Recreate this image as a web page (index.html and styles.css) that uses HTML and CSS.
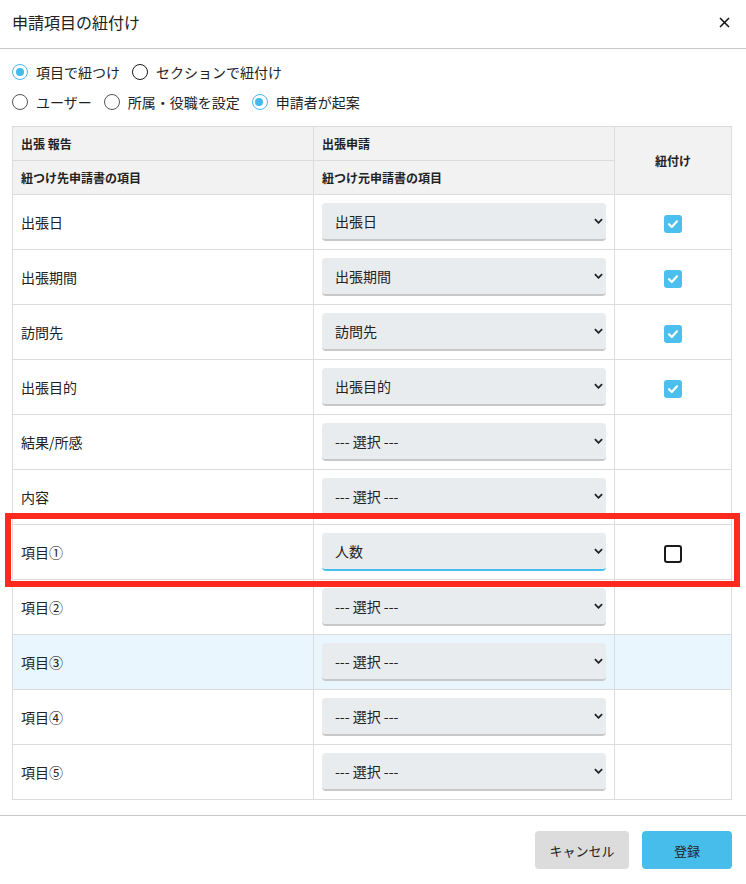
FILE: index.html
```html
<!DOCTYPE html>
<html lang="ja">
<head>
<meta charset="utf-8">
<title>申請項目の紐付け</title>
<link rel="stylesheet" href="styles.css">
</head>
<body>
<div class="dialog">
  <header class="dlg-head">
    <h1 class="dlg-title">申請項目の紐付け</h1>
    <button class="close-btn" aria-label="close">
      <svg width="11" height="11" viewBox="0 0 11 11"><path d="M1 1 L10 10 M10 1 L1 10" stroke="#111" stroke-width="1.5" fill="none"/></svg>
    </button>
  </header>

  <div class="dlg-body">
    <div class="radio-row">
      <label class="radio"><span class="rc on"></span>項目で紐つけ</label>
      <label class="radio"><span class="rc dark"></span>セクションで紐付け</label>
    </div>
    <div class="radio-row">
      <label class="radio"><span class="rc"></span>ユーザー</label>
      <label class="radio"><span class="rc"></span>所属・役職を設定</label>
      <label class="radio"><span class="rc on"></span>申請者が起案</label>
    </div>

    <div class="table-wrap">
      <table class="map">
        <colgroup><col class="c1"><col class="c2"><col class="c3"></colgroup>
        <thead>
          <tr><th>出張 報告</th><th>出張申請</th><th rowspan="2" class="center">紐付け</th></tr>
          <tr><th>紐つけ先申請書の項目</th><th>紐つけ元申請書の項目</th></tr>
        </thead>
        <tbody>
          <tr><td>出張日</td><td><div class="sel"><span>出張日</span><svg class="chev" viewBox="0 0 10 6"><path d="M1 1 L5 5 L9 1" stroke="#222" stroke-width="2" fill="none"/></svg></div></td><td class="center"><span class="cb on"><svg viewBox="0 0 18 18"><path d="M5 9.2 L7.8 12 L13 6.3" stroke="#fff" stroke-width="2.2" fill="none" stroke-linecap="round" stroke-linejoin="round"/></svg></span></td></tr>
          <tr><td>出張期間</td><td><div class="sel"><span>出張期間</span><svg class="chev" viewBox="0 0 10 6"><path d="M1 1 L5 5 L9 1" stroke="#222" stroke-width="2" fill="none"/></svg></div></td><td class="center"><span class="cb on"><svg viewBox="0 0 18 18"><path d="M5 9.2 L7.8 12 L13 6.3" stroke="#fff" stroke-width="2.2" fill="none" stroke-linecap="round" stroke-linejoin="round"/></svg></span></td></tr>
          <tr><td>訪問先</td><td><div class="sel"><span>訪問先</span><svg class="chev" viewBox="0 0 10 6"><path d="M1 1 L5 5 L9 1" stroke="#222" stroke-width="2" fill="none"/></svg></div></td><td class="center"><span class="cb on"><svg viewBox="0 0 18 18"><path d="M5 9.2 L7.8 12 L13 6.3" stroke="#fff" stroke-width="2.2" fill="none" stroke-linecap="round" stroke-linejoin="round"/></svg></span></td></tr>
          <tr><td>出張目的</td><td><div class="sel"><span>出張目的</span><svg class="chev" viewBox="0 0 10 6"><path d="M1 1 L5 5 L9 1" stroke="#222" stroke-width="2" fill="none"/></svg></div></td><td class="center"><span class="cb on"><svg viewBox="0 0 18 18"><path d="M5 9.2 L7.8 12 L13 6.3" stroke="#fff" stroke-width="2.2" fill="none" stroke-linecap="round" stroke-linejoin="round"/></svg></span></td></tr>
          <tr><td>結果/所感</td><td><div class="sel"><span>--- 選択 ---</span><svg class="chev" viewBox="0 0 10 6"><path d="M1 1 L5 5 L9 1" stroke="#222" stroke-width="2" fill="none"/></svg></div></td><td></td></tr>
          <tr><td>内容</td><td><div class="sel"><span>--- 選択 ---</span><svg class="chev" viewBox="0 0 10 6"><path d="M1 1 L5 5 L9 1" stroke="#222" stroke-width="2" fill="none"/></svg></div></td><td></td></tr>
          <tr><td>項目①</td><td><div class="sel focus"><span>人数</span><svg class="chev" viewBox="0 0 10 6"><path d="M1 1 L5 5 L9 1" stroke="#222" stroke-width="2" fill="none"/></svg></div></td><td class="center"><span class="cb"></span></td></tr>
          <tr><td>項目②</td><td><div class="sel"><span>--- 選択 ---</span><svg class="chev" viewBox="0 0 10 6"><path d="M1 1 L5 5 L9 1" stroke="#222" stroke-width="2" fill="none"/></svg></div></td><td></td></tr>
          <tr class="hover"><td>項目③</td><td><div class="sel"><span>--- 選択 ---</span><svg class="chev" viewBox="0 0 10 6"><path d="M1 1 L5 5 L9 1" stroke="#222" stroke-width="2" fill="none"/></svg></div></td><td></td></tr>
          <tr><td>項目④</td><td><div class="sel"><span>--- 選択 ---</span><svg class="chev" viewBox="0 0 10 6"><path d="M1 1 L5 5 L9 1" stroke="#222" stroke-width="2" fill="none"/></svg></div></td><td></td></tr>
          <tr><td>項目⑤</td><td><div class="sel"><span>--- 選択 ---</span><svg class="chev" viewBox="0 0 10 6"><path d="M1 1 L5 5 L9 1" stroke="#222" stroke-width="2" fill="none"/></svg></div></td><td></td></tr>
        </tbody>
      </table>
      <div class="highlight"></div>
    </div>
  </div>

  <footer class="dlg-foot">
    <button class="btn btn-cancel">キャンセル</button>
    <button class="btn btn-ok">登録</button>
  </footer>
</div>
</body>
</html>
```

FILE: styles.css
```css
* { box-sizing: border-box; }
html, body { margin: 0; padding: 0; background: #fff; }
body {
  font-family: "Noto Sans CJK JP", "Noto Sans", sans-serif;
  color: #222;
  width: 746px;
  height: 884px;
  overflow: hidden;
}
.dialog { width: 746px; height: 884px; display: flex; flex-direction: column; }

.dlg-head {
  height: 49px;
  border-bottom: 1px solid #c8c8c8;
  display: flex;
  align-items: center;
  justify-content: space-between;
  padding: 0 16px 4px 12px;
}
.dlg-title { margin: 0; font-size: 16px; font-weight: 400; color: #222; line-height: 1; }
.close-btn { border: 0; background: none; padding: 0; width: 11px; height: 11px; display: flex; }

.dlg-body { padding: 8px 15px 0 12px; }
.radio-row { display: flex; align-items: center; gap: 12px; height: 30px; font-size: 14px; }
.radio { display: flex; align-items: center; gap: 8px; color: #222; }
.rc {
  width: 16px; height: 16px; border-radius: 50%;
  border: 1.3px solid #555; background: #fff; position: relative;
}
.rc.dark { border: 1.8px solid #1a1a1a; }
.rc.on { border: 1.5px solid #43b9ec; }
.rc.on::after {
  content: ""; position: absolute; left: 2.5px; top: 2.5px;
  width: 8px; height: 8px; border-radius: 50%; background: #43b9ec;
}

.table-wrap { position: relative; margin-top: 9px; }
.map { width: 719px; border-collapse: collapse; table-layout: fixed; }
.c1 { width: 301px; }
.c2 { width: 301px; }
.c3 { width: 117px; }
.map th, .map td { border: 1px solid #dcdcdc; }
.map th {
  background: #f2f2f2; font-size: 12px; font-weight: 700; text-align: left;
  height: 34px; padding: 0 8px; color: #222;
}
.map td { height: 55px; padding: 0 8px; font-size: 14px; }
.map .center { text-align: center; }
.map tr.hover td { background: #eaf6fd; }

.sel {
  height: 38px; background: #e9ecef; border-radius: 4px;
  border-bottom: 2px solid #c8c8c8;
  display: flex; align-items: center; justify-content: space-between;
  padding: 0 3px 0 13px; font-size: 14px; color: #222;
}
.sel.focus { border-bottom-color: #47bdec; }
.chev { width: 9px; height: 6px; }

.cb {
  display: inline-block; width: 18px; height: 18px; border-radius: 3px;
  border: 2px solid #1a1a1a; vertical-align: middle; background: #fff;
}
.cb.on { border: 0; background: #4bbfee; }
.cb svg { width: 18px; height: 18px; display: block; }

.highlight {
  position: absolute; left: -7px; top: 387px; width: 735px; height: 74px;
  border: 6px solid #ff2a1f; pointer-events: none;
}

.dlg-foot {
  margin-top: 15px;
  border-top: 1px solid #c8c8c8;
  display: flex; justify-content: flex-end; gap: 13px;
  padding: 15px 14px 0 0;
}
.btn {
  height: 38px; border: 0; border-radius: 4px; font-size: 13px; color: #222;
  font-family: "Noto Sans CJK JP", "Noto Sans", sans-serif;
}
.btn-cancel { width: 94px; background: #dcdcdc; }
.btn-ok { width: 90px; background: #47bdec; }
```
